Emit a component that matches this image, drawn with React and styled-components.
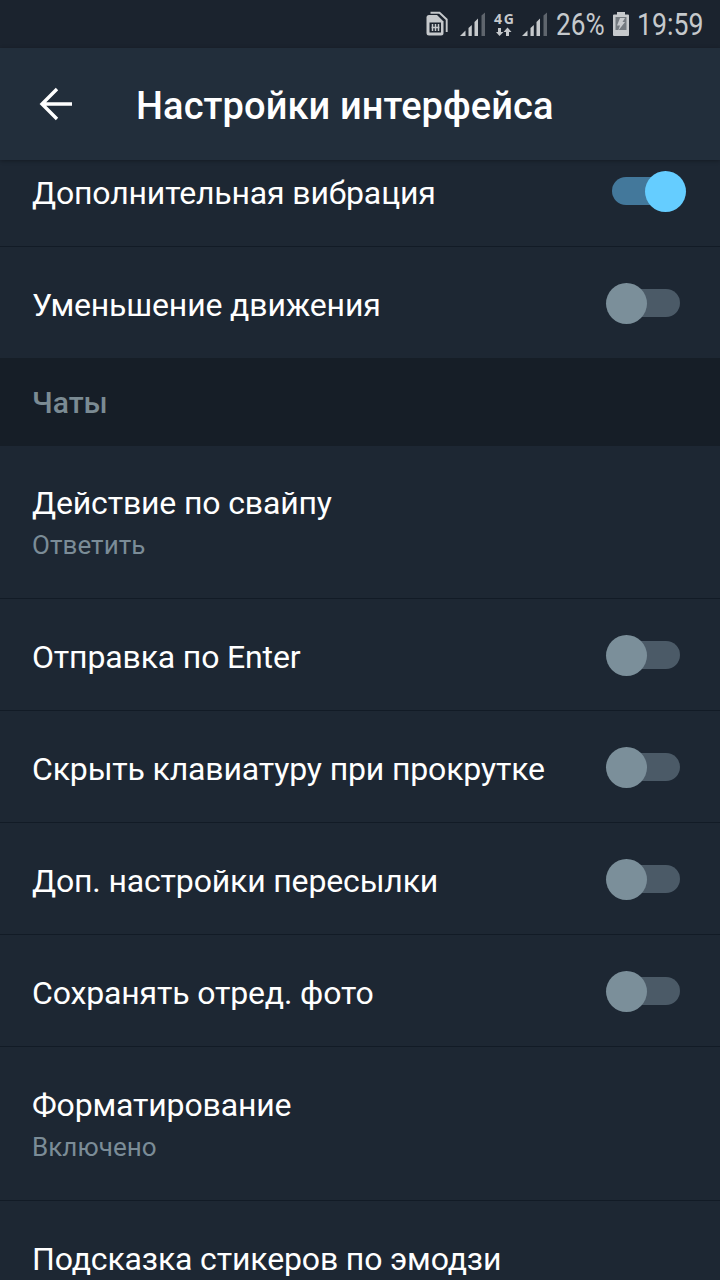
import React from "react";
import styled, { createGlobalStyle } from "styled-components";

const GlobalStyle = createGlobalStyle`
  * { box-sizing: border-box; }
  html, body { margin: 0; background: #1d2733; overflow: hidden; }
  body { font-family: Roboto, "Liberation Sans", sans-serif; }
`;

const Screen = styled.main`
  width: 720px;
  height: 1280px;
  display: flex;
  flex-direction: column;
  overflow: hidden;
  background: #1d2733;
  color: #fff;
`;

const StatusBar = styled.div`
  flex: none;
  height: 48px;
  padding-right: 15px;
  display: flex;
  align-items: center;
  justify-content: flex-end;
  background: #1b232e;
  color: #c6c9cc;
`;

const StatusIcons = styled.svg`
  display: block;
  width: ${(p) => p.width}px;
  height: 48px;
`;

const StatusText = styled.div`
  width: ${(p) => p.$width}px;
  height: 48px;
  line-height: 50px;
  font-size: 31px;
  white-space: nowrap;

  span {
    display: inline-block;
    transform: scaleX(${(p) => p.$scale});
    transform-origin: left center;
  }
`;

const AppBar = styled.header`
  flex: none;
  height: 112px;
  display: flex;
  align-items: center;
  padding-left: 36px;
  gap: 60px;
  background: #222e3b;
  box-shadow: 0 1px 4px rgba(0, 0, 0, 0.3);
  z-index: 1;
`;

const Title = styled.h1`
  margin: 0;
  padding-top: 4px;
  font-size: 38px;
  font-weight: 500;
  line-height: 46px;
  letter-spacing: 0.1px;
  white-space: nowrap;
`;

const List = styled.div`
  flex: 1;
  min-height: 0;
  overflow: hidden;
`;

const ListContent = styled.div`
  margin-top: -25px;
`;

const Row = styled.div`
  height: ${(p) => p.$height || 112}px;
  padding: 0 34px 0 32px;
  display: flex;
  align-items: center;
  justify-content: space-between;
  border-bottom: ${(p) => (p.$last ? "0" : "1px solid #121b26")};
`;

const Label = styled.div`
  padding-top: 5px;
  font-size: 32px;
  line-height: 40px;
  letter-spacing: -0.15px;
  white-space: nowrap;
`;

const DetailRow = styled(Row)`
  flex-direction: column;
  align-items: flex-start;
  justify-content: flex-end;
  padding-bottom: 31px;
`;

const Value = styled.div`
  font-size: 26px;
  line-height: 44px;
  letter-spacing: 0.05px;
  color: #7b8c97;
`;

const Section = styled.h2`
  margin: 0;
  height: 88px;
  display: flex;
  align-items: center;
  padding: 0 32px;
  background: #161e27;
  color: #7b8b93;
  font-size: 30px;
  font-weight: 500;
`;

const Track = styled.div`
  width: 80px;
  height: 41px;
  margin-top: 2px;
  padding: 6px 6px 0;
  position: relative;

  &::before {
    content: "";
    display: block;
    width: 68px;
    height: 28px;
    border-radius: 14px;
    background: ${(p) => (p.$on ? "#43789b" : "#4b5a67")};
  }
`;

const Thumb = styled.div`
  position: absolute;
  top: 0;
  left: ${(p) => (p.$on ? 39 : 0)}px;
  width: 41px;
  height: 41px;
  border-radius: 50%;
  background: ${(p) => (p.$on ? "#65cdff" : "#7b8f9a")};
`;

function Switch({ on }) {
  return (
    <Track $on={on} role="switch" aria-checked={!!on}>
      <Thumb $on={on} />
    </Track>
  );
}

function SwitchRow({ label, on, last }) {
  return (
    <Row $last={last} $height={last ? 111 : 112}>
      <Label>{label}</Label>
      <Switch on={on} />
    </Row>
  );
}

function Signal({ x }) {
  return (
    <g transform={`translate(${x} 0)`}>
      <path d="M0 36L5.500 30.500V36Z" />
      <path d="M8.500 28L11.800 25V36H8.500Z" />
      <path d="M14.500 22L18 18.500V36H14.500Z" />
      <path d="M21.500 36V15.500L25 12.500V36Z" opacity="0.4" />
    </g>
  );
}

function NetworkIcons() {
  return (
    <StatusIcons width={132} viewBox="424 0 132 48" fill="currentColor">
      <path d="M430.500 12.700H439.500L446.700 19.500V32" fill="none" stroke="currentColor" strokeWidth="1.9" />
      <path d="M429 15H437L443.500 21.500V33Q443.500 35.500 441 35.500H429Q426.500 35.500 426.500 33V17.500Q426.500 15 429 15Z" />
      <path d="M429.500 22.500H441V32.500H429.500Z" fill="#1b232e" />
      <path d="M432.500 24V31M435.500 24V31M438.500 24V31M431.500 27.500H439.500" fill="none" stroke="currentColor" strokeWidth="1.5" />
      <Signal x={460} />
      <text x="494" y="24" fontFamily="Noto Sans, sans-serif" fontSize="14" fontWeight="700" textLength="20">4G</text>
      <path d="M498 28H501V32H503.500L499.500 36L496 32H498ZM506 36V32H503.500L507.500 27.500L511.500 32H509V36Z" />
      <Signal x={522} />
    </StatusIcons>
  );
}

function Battery() {
  return (
    <StatusIcons width={28} viewBox="609 0 28 48" fill="currentColor">
      <path d="M617 12H625V14.500H628Q629 14.500 629 15.500V35Q629 36 628 36H614Q613 36 613 35V15.500Q613 14.500 614 14.500H617Z" />
      <path d="M615.500 17H626.500V30H615.500Z" fill="#747a80" />
      <path d="M620 18H625L622.500 22H625L618 31L620 25.500H617Z" />
    </StatusIcons>
  );
}

export default function App() {
  return (
    <>
      <GlobalStyle />
      <Screen>
        <StatusBar>
          <NetworkIcons />
          <StatusText $width={53} $scale={0.845}><span>26%</span></StatusText>
          <Battery />
          <StatusText $width={68} $scale={0.86}><span>19:59</span></StatusText>
        </StatusBar>
        <AppBar>
          <svg width="40" height="40" viewBox="0 0 40 40" fill="none" stroke="#fff" strokeWidth="3.4">
            <path d="M36 20H6M21 5L6 20L21 35" />
          </svg>
          <Title>Настройки интерфейса</Title>
        </AppBar>
        <List>
          <ListContent>
            <SwitchRow label="Дополнительная вибрация" on />
            <SwitchRow label="Уменьшение движения" last />
            <Section>Чаты</Section>
            <DetailRow $height={153}>
              <Label>Действие по свайпу</Label>
              <Value>Ответить</Value>
            </DetailRow>
            <SwitchRow label="Отправка по Enter" />
            <SwitchRow label="Скрыть клавиатуру при прокрутке" />
            <SwitchRow label="Доп. настройки пересылки" />
            <SwitchRow label="Сохранять отред. фото" />
            <DetailRow $height={154}>
              <Label>Форматирование</Label>
              <Value>Включено</Value>
            </DetailRow>
            <Row>
              <Label>Подсказка стикеров по эмодзи</Label>
            </Row>
          </ListContent>
        </List>
      </Screen>
    </>
  );
}
